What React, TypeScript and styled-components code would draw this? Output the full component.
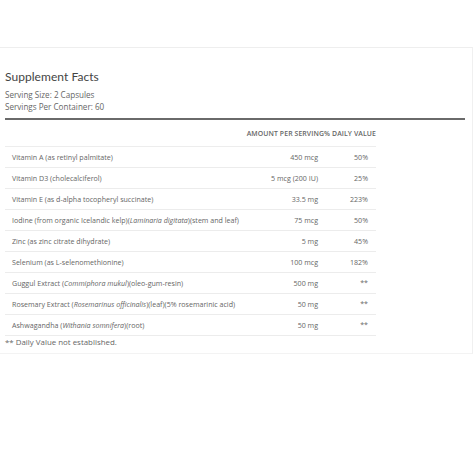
import React from "react";
import styled, { createGlobalStyle } from "styled-components";

const Global = createGlobalStyle`
  html, body { margin: 0; padding: 0; background: #ffffff; }
  body { font-family: "Open Sans", Lato, "Liberation Sans", sans-serif; font-weight: 400; }
`;

const Page = styled.div`
  width: 474px;
  height: 474px;
  padding-top: 47px;
  box-sizing: border-box;
`;

const Panel = styled.section`
  width: 473px;
  height: 307px;
  box-sizing: border-box;
  border-top: 1px solid #eeeeee;
  border-right: 1px solid #f0f0f0;
  border-bottom: 1px solid #f3f3f3;
  padding: 21px 0 0 5px;
`;

const Title = styled.h2`
  margin: 0;
  font-family: Lato, "Open Sans", sans-serif;
  font-size: 12px;
  line-height: 16px;
  font-weight: 400;
  color: #444444;
  letter-spacing: 0.05px;
`;

const Meta = styled.div`
  margin: 0;
  font-size: 8.1px;
  line-height: 12px;
  font-weight: 400;
  color: #666666;
`;

const MetaBlock = styled.div`
  margin-top: 4px;
`;

const Rule = styled.hr`
  margin: 5px 0 0 0;
  width: 460px;
  border: none;
  height: 2px;
  background: #6a6a6a;
`;

const Table = styled.div`
  width: 371px;
`;

const HeaderRow = styled.div`
  display: flex;
  justify-content: flex-end;
  align-items: center;
  height: 25px;
  border-bottom: 1px solid #ededed;
  padding-top: 1px;
  font-size: 6.9px;
  font-weight: 600;
  color: #666666;
  text-transform: uppercase;
  letter-spacing: 0.1px;
`;

const Row = styled.div`
  display: grid;
  grid-template-columns: 1fr 80px 50px;
  align-items: center;
  height: 20px;
  border-bottom: 1px solid #ececec;
  font-size: 7.1px;
  color: #666666;
`;

const Name = styled.span`
  padding-left: 7px;
  white-space: nowrap;
`;

const Num = styled.span`
  text-align: right;
  padding-right: 8px;
  white-space: nowrap;
`;

const Foot = styled.div`
  margin: 0;
  font-size: 7.9px;
  line-height: 12px;
  font-weight: 400;
  color: #666666;
`;

type Item = { name: React.ReactNode; amount: string; dv: string };

const items: Item[] = [
  { name: "Vitamin A (as retinyl palmitate)", amount: "450 mcg", dv: "50%" },
  { name: "Vitamin D3 (cholecalciferol)", amount: "5 mcg (200 IU)", dv: "25%" },
  { name: "Vitamin E (as d-alpha tocopheryl succinate)", amount: "33.5 mg", dv: "223%" },
  {
    name: (
      <>
        Iodine (from organic Icelandic kelp)(<i>Laminaria digitata</i>)(stem and leaf)
      </>
    ),
    amount: "75 mcg",
    dv: "50%",
  },
  { name: "Zinc (as zinc citrate dihydrate)", amount: "5 mg", dv: "45%" },
  { name: "Selenium (as L-selenomethionine)", amount: "100 mcg", dv: "182%" },
  {
    name: (
      <>
        Guggul Extract (<i>Commiphora mukul</i>)(oleo-gum-resin)
      </>
    ),
    amount: "500 mg",
    dv: "**",
  },
  {
    name: (
      <>
        Rosemary Extract (<i>Rosemarinus officinalis</i>)(leaf)(5% rosemarinic acid)
      </>
    ),
    amount: "50 mg",
    dv: "**",
  },
  {
    name: (
      <>
        Ashwagandha (<i>Withania somnifera</i>)(root)
      </>
    ),
    amount: "50 mg",
    dv: "**",
  },
];

export default function App() {
  return (
    <Page>
      <Global />
      <Panel>
        <Title>Supplement Facts</Title>
        <MetaBlock>
          <Meta>Serving Size: 2 Capsules</Meta>
          <Meta>Servings Per Container: 60</Meta>
        </MetaBlock>
        <Rule />
        <Table>
          <HeaderRow>
            <span>Amount Per Serving</span>
            <span>% Daily Value</span>
          </HeaderRow>
          {items.map((it, i) => (
            <Row key={i}>
              <Name>{it.name}</Name>
              <Num>{it.amount}</Num>
              <Num>{it.dv}</Num>
            </Row>
          ))}
        </Table>
        <Foot>** Daily Value not established.</Foot>
      </Panel>
    </Page>
  );
}
